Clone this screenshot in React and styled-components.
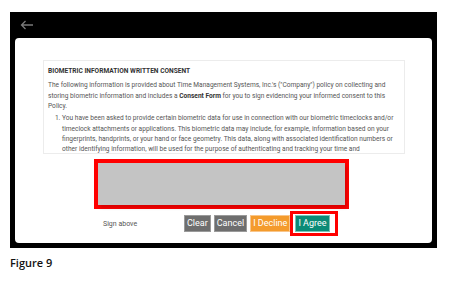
import styled, { createGlobalStyle } from 'styled-components';

const GlobalStyle = createGlobalStyle`
  html, body {
    margin: 0;
    padding: 0;
    background: #fff;
  }
  body {
    font-family: Roboto, "Liberation Sans", sans-serif;
  }
`;

const Page = styled.div`
  width: 456px;
  height: 283px;
  padding: 12px 0 0 10px;
  box-sizing: border-box;
`;

const Frame = styled.div`
  width: 427px;
  height: 236px;
  background: #000;
  box-sizing: border-box;
  padding: 0 5px 5px 5px;
  display: flex;
  flex-direction: column;
`;

const TopBar = styled.div`
  height: 26px;
  display: flex;
  align-items: center;
  padding-left: 5px;
`;

const Card = styled.div`
  flex: 1;
  background: #fff;
  border-radius: 4px;
  padding: 22px 27px 0 28px;
  display: flex;
  flex-direction: column;
`;

const Doc = styled.div`
  height: 94px;
  box-sizing: border-box;
  border: 1px solid #ececec;
  overflow: hidden;
  padding: 4.5px 0 0 4px;
  color: #555;
  font-size: 6.6px;
  line-height: 10.4px;
  white-space: nowrap;
`;

const Title = styled.div`
  font-weight: 700;
  color: #333;
  margin-bottom: 4.5px;
`;

const Para = styled.p`
  margin: 0 0 1.5px 0;
  b {
    color: #333;
  }
`;

const List = styled.ol`
  margin: 0;
  padding-left: 14px;
`;

const SignArea = styled.div`
  margin: 5px 0 0 51px;
  display: flex;
  flex-direction: column;
`;

const SigHighlight = styled.div`
  width: 255px;
  height: 50px;
  box-sizing: border-box;
  border: 4.5px solid #ff0000;
  border-right-width: 4px;
`;

const SigPad = styled.div`
  height: 100%;
  background: #c4c4c4;
  box-shadow: 2px 3px 3px rgba(0, 0, 0, 0.15);
`;

const ActionRow = styled.div`
  display: flex;
  align-items: center;
  margin-top: 2px;
`;

const SignLabel = styled.div`
  width: 90px;
  padding-left: 9px;
  box-sizing: border-box;
  font-size: 7px;
  color: #555;
`;

const Buttons = styled.div`
  display: flex;
  align-items: center;
  gap: 3px;
`;

const Button = styled.button`
  height: 17px;
  padding: 0 2px;
  border: 1px solid ${({ $tone }) => ($tone === 'gray' ? '#9a9a9a' : $tone === 'orange' ? '#f8c58a' : '#7cc3b6')};
  background: ${({ $tone }) => ($tone === 'gray' ? '#6e6e6e' : $tone === 'orange' ? '#f49b2c' : '#0c8b77')};
  color: #fff;
  font-family: Roboto, "Liberation Sans", sans-serif;
  font-size: 9px;
  line-height: 15px;
  cursor: pointer;
`;

const AgreeHighlight = styled.div`
  margin-left: -3px;
  border: 3px solid #ff0000;
  padding: 1px 5px 1px 2px;
  display: flex;
`;

const Caption = styled.div`
  margin-top: 7px;
  font-family: "Open Sans", "Liberation Sans", sans-serif;
  font-weight: 600;
  font-size: 11px;
  color: #111;
`;

function BackArrow() {
  return (
    <svg width="14" height="10" viewBox="0 0 14 10" fill="none">
      <path d="M13 5H1.5M5.5 1L1.5 5l4 4" stroke="#7a7a7a" strokeWidth="1.3" />
    </svg>
  );
}

export default function App() {
  return (
    <Page>
      <GlobalStyle />
      <Frame>
        <TopBar>
          <BackArrow />
        </TopBar>
        <Card>
          <Doc>
            <Title>BIOMETRIC INFORMATION WRITTEN CONSENT</Title>
            <Para>
              The following information is provided about Time Management Systems, Inc.'s ("Company") policy on collecting and
              <br />
              storing biometric information and includes a <b>Consent Form</b> for you to sign evidencing your informed consent to this
              <br />
              Policy.
            </Para>
            <List>
              <li>
                You have been asked to provide certain biometric data for use in connection with our biometric timeclocks and/or
                <br />
                timeclock attachments or applications. This biometric data may include, for example, information based on your
                <br />
                fingerprints, handprints, or your hand or face geometry. This data, along with associated identification numbers or
                <br />
                other identifying information, will be used for the purpose of authenticating and tracking your time and
              </li>
            </List>
          </Doc>
          <SignArea>
            <SigHighlight>
              <SigPad />
            </SigHighlight>
            <ActionRow>
              <SignLabel>Sign above</SignLabel>
              <Buttons>
                <Button $tone="gray">Clear</Button>
                <Button $tone="gray">Cancel</Button>
                <Button $tone="orange">I Decline</Button>
                <AgreeHighlight>
                  <Button $tone="teal">I Agree</Button>
                </AgreeHighlight>
              </Buttons>
            </ActionRow>
          </SignArea>
        </Card>
      </Frame>
      <Caption>Figure 9</Caption>
    </Page>
  );
}
